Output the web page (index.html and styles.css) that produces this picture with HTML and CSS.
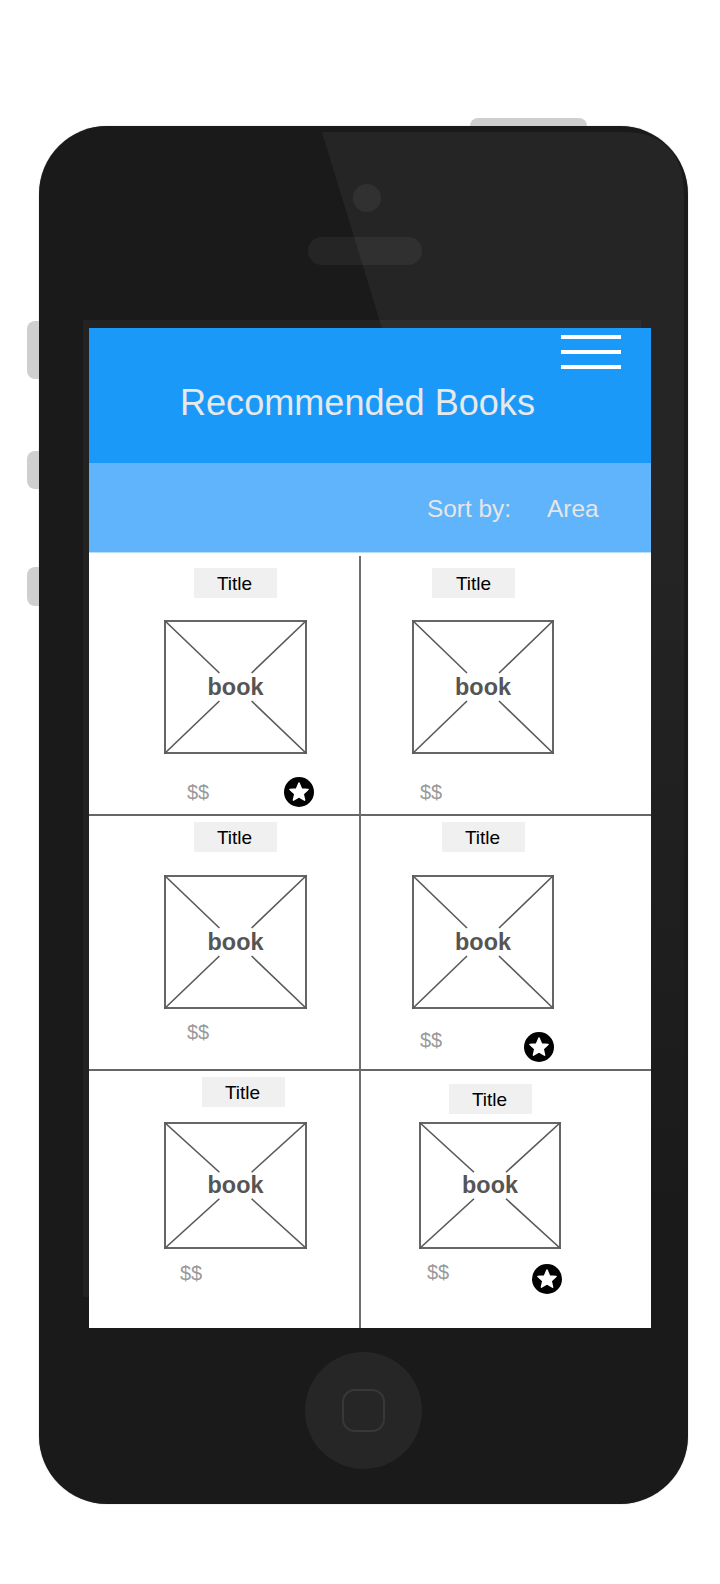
FILE: index.html
```html
<!DOCTYPE html>
<html>
    <head>
        <meta charset="UTF-8">
        <title>Recommended Books</title>
        <link rel="stylesheet" href="styles.css">
    </head>
    <body>
        <div class="phone">
            <div class="side-btn side-btn-top"></div>
            <div class="side-btn side-btn-mute"></div>
            <div class="side-btn side-btn-up"></div>
            <div class="side-btn side-btn-down"></div>
            <svg class="glare" width="649" height="1378" viewBox="0 0 649 1378">
                <defs>
                    <linearGradient id="glareFade" gradientUnits="userSpaceOnUse" x1="0" y1="0" x2="0" y2="1100">
                        <stop offset="0.3" stop-color="#fff" stop-opacity="0.05"/>
                        <stop offset="1" stop-color="#fff" stop-opacity="0"/>
                    </linearGradient>
                </defs>
                <path d="M283 6H583Q645 6 645 70V1180H400V202H343Z" fill="url(#glareFade)"/>
            </svg>
            <div class="bezel"></div>

            <div class="earpiece">
                <div class="camera"></div>
                <div class="speaker"></div>
            </div>

            <div class="screen">
                <div class="header">
                    <div class="menu"><span></span><span></span><span></span></div>
                    <h1>Recommended Books</h1>
                </div>
                <div class="sort">
                    <span>Sort by:</span>
                    <span>Area</span>
                </div>
                <div class="books">
                    <div class="cell left row-1 cell-1">
                        <div class="title">Title</div>
                        <div class="book">
                            <svg viewBox="0 0 142 134" preserveAspectRatio="none">
                                <path d="M0 0L55 53M142 0L87 53M0 134L55 81M142 134L87 81"/>
                            </svg>
                            <span>book</span>
                        </div>
                        <div class="foot">
                            <span class="price">$$</span>
                            <svg class="star" viewBox="0 0 30 30">
                                <circle cx="15" cy="15" r="15"/>
                                <polygon points="15,6 17.59,11.94 24.04,12.56 19.18,16.86 20.58,23.19 15,19.9 9.42,23.19 10.82,16.86 5.96,12.56 12.41,11.94"/>
                            </svg>
                        </div>
                    </div>
                    <div class="cell right row-1 cell-2">
                        <div class="title">Title</div>
                        <div class="book">
                            <svg viewBox="0 0 142 134" preserveAspectRatio="none">
                                <path d="M0 0L55 53M142 0L87 53M0 134L55 81M142 134L87 81"/>
                            </svg>
                            <span>book</span>
                        </div>
                        <div class="foot">
                            <span class="price">$$</span>
                        </div>
                    </div>
                    <div class="cell left row-2 cell-3">
                        <div class="title">Title</div>
                        <div class="book">
                            <svg viewBox="0 0 142 134" preserveAspectRatio="none">
                                <path d="M0 0L55 53M142 0L87 53M0 134L55 81M142 134L87 81"/>
                            </svg>
                            <span>book</span>
                        </div>
                        <div class="foot">
                            <span class="price">$$</span>
                        </div>
                    </div>
                    <div class="cell right row-2 cell-4">
                        <div class="title">Title</div>
                        <div class="book">
                            <svg viewBox="0 0 142 134" preserveAspectRatio="none">
                                <path d="M0 0L55 53M142 0L87 53M0 134L55 81M142 134L87 81"/>
                            </svg>
                            <span>book</span>
                        </div>
                        <div class="foot">
                            <span class="price">$$</span>
                            <svg class="star" viewBox="0 0 30 30">
                                <circle cx="15" cy="15" r="15"/>
                                <polygon points="15,6 17.59,11.94 24.04,12.56 19.18,16.86 20.58,23.19 15,19.9 9.42,23.19 10.82,16.86 5.96,12.56 12.41,11.94"/>
                            </svg>
                        </div>
                    </div>
                    <div class="cell left row-3 cell-5">
                        <div class="title">Title</div>
                        <div class="book">
                            <svg viewBox="0 0 142 134" preserveAspectRatio="none">
                                <path d="M0 0L55 53M142 0L87 53M0 134L55 81M142 134L87 81"/>
                            </svg>
                            <span>book</span>
                        </div>
                        <div class="foot">
                            <span class="price">$$</span>
                        </div>
                    </div>
                    <div class="cell right row-3 cell-6">
                        <div class="title">Title</div>
                        <div class="book">
                            <svg viewBox="0 0 142 134" preserveAspectRatio="none">
                                <path d="M0 0L55 53M142 0L87 53M0 134L55 81M142 134L87 81"/>
                            </svg>
                            <span>book</span>
                        </div>
                        <div class="foot">
                            <span class="price">$$</span>
                            <svg class="star" viewBox="0 0 30 30">
                                <circle cx="15" cy="15" r="15"/>
                                <polygon points="15,6 17.59,11.94 24.04,12.56 19.18,16.86 20.58,23.19 15,19.9 9.42,23.19 10.82,16.86 5.96,12.56 12.41,11.94"/>
                            </svg>
                        </div>
                    </div>
                </div>
            </div>

            <div class="chin">
                <div class="home"><div class="home-square"></div></div>
            </div>
        </div>
    </body>
</html>
```

FILE: styles.css
```css
html, body{
    margin: 0;
    padding: 0;
    background-color: #FFF;
}
body{
    font-family: "Liberation Sans", Arial, sans-serif;
    padding: 126px 32px 80px 39px;
    overflow: hidden;
}

/* phone shell */
.phone{
    position: relative;
    z-index: 0;
    width: 649px;
    height: 1378px;
    padding: 0 37px 0 50px;
    box-sizing: border-box;
    background-color: #1A1A1A;
    border-radius: 68px;
    box-shadow: 0 0 1px rgba(90, 90, 90, .7);
}
.side-btn{
    position: absolute;
    left: -12px;
    width: 12px;
    background-color: #CFCFCF;
    border-radius: 8px 0 0 8px;
}
.side-btn-top{
    left: 431px;
    top: -8px;
    width: 117px;
    height: 8px;
    border-radius: 8px 8px 0 0;
}
.side-btn-mute{
    top: 195px;
    height: 58px;
}
.side-btn-up{
    top: 325px;
    height: 38px;
}
.side-btn-down{
    top: 441px;
    height: 39px;
}
.glare{
    position: absolute;
    left: 0;
    top: 0;
    z-index: -1;
}
.bezel{
    position: absolute;
    left: 44px;
    top: 194px;
    width: 558px;
    height: 977px;
    z-index: -1;
    background-color: rgba(255, 255, 255, .04);
}
.earpiece{
    height: 202px;
    box-sizing: border-box;
    padding-top: 58px;
    padding-left: 219px;
}
.camera{
    width: 28px;
    height: 28px;
    margin-left: 45px;
    border-radius: 50%;
    background-color: rgba(255, 255, 255, .06);
}
.speaker{
    width: 114px;
    height: 28px;
    margin-top: 25px;
    border-radius: 14px;
    background-color: rgba(255, 255, 255, .05);
}
.chin{
    height: 176px;
    box-sizing: border-box;
    padding: 24px 0 0 216px;
}
.home{
    width: 117px;
    height: 117px;
    border-radius: 50%;
    background-color: #262626;
    display: flex;
    justify-content: center;
    align-items: center;
}
.home-square{
    width: 43px;
    height: 43px;
    box-sizing: border-box;
    border: 2px solid #383838;
    border-radius: 13px;
}

/* screen */
.screen{
    width: 562px;
    height: 1000px;
    background-color: #FFF;
    display: flex;
    flex-direction: column;
}
.header{
    height: 135px;
    box-sizing: border-box;
    padding-top: 7px;
    background-color: #1B99F8;
    display: flex;
    flex-direction: column;
}
.menu{
    align-self: flex-end;
    width: 60px;
    margin-right: 30px;
    display: flex;
    flex-direction: column;
    gap: 11px;
}
.menu span{
    height: 4px;
    background-color: #FFF;
}
h1{
    margin: 14px 0 0 91px;
    font-size: 36.1px;
    line-height: 40px;
    font-weight: normal;
    color: #E8E8E8;
}
.sort{
    height: 90px;
    box-sizing: border-box;
    padding: 3px 0 0 338px;
    background-color: #60B4FB;
    border-bottom: 1px solid #B9DEFF;
    display: flex;
    align-items: center;
    gap: 36px;
    font-size: 24.4px;
    color: #E6E6E6;
}

/* book grid */
.books{
    margin-top: 3px;
    flex: 1;
    display: grid;
    grid-template-columns: 272px 290px;
    grid-template-rows: 260px 255px 1fr;
}
.cell{
    box-sizing: border-box;
}
.left{
    padding-left: 75px;
    border-right: 2px solid #6E6E6E;
}
.right{
    padding-left: 51px;
}
.row-1, .row-2{
    border-bottom: 2px solid #666;
}
.title{
    width: 83px;
    height: 30px;
    line-height: 32px;
    text-indent: -2px;
    text-align: center;
    font-size: 19px;
    color: #000;
    background-color: #F0F0F0;
}
.book{
    position: relative;
    width: 142px;
    height: 134px;
    margin-top: 23px;
    box-sizing: border-box;
    border: 2px solid #666;
    display: flex;
    justify-content: center;
    align-items: center;
    font-size: 23.4px;
    font-weight: bold;
    color: #555;
}
.left .book{
    width: 143px;
}
.book svg{
    position: absolute;
    left: -2px;
    top: -2px;
    width: calc(100% + 4px);
    height: calc(100% + 4px);
}
.book path{
    fill: none;
    stroke: #5A5A5A;
    stroke-width: 1.6;
}
.book span{
    position: relative;
}
.foot{
    min-height: 30px;
    display: flex;
    align-items: center;
    margin-top: 23px;
}
.price{
    font-size: 20px;
    line-height: 24px;
    color: #999;
    margin-left: 23px;
}
.star{
    width: 30px;
    height: 30px;
    margin-left: 75px;
}
.star polygon{
    fill: #FFF;
    stroke: #FFF;
    stroke-width: 1.5;
    stroke-linejoin: round;
}

/* every cell in the wireframe sits a little differently */
.cell-1 .title, .cell-3 .title{
    margin-left: 30px;
}
.cell-1 .title{
    margin-top: 12px;
}
.cell-1 .book, .cell-2 .book{
    margin-top: 22px;
}
.cell-2 .title{
    margin: 12px 0 0 20px;
    text-indent: 0;
}
.cell-2 .price, .cell-4 .price{
    margin-left: 8px;
}
.cell-3 .title, .cell-4 .title{
    margin-top: 6px;
}
.cell-3 .foot{
    margin-top: 8px;
}
.cell-4 .title{
    margin-left: 30px;
}
.cell-4 .price, .cell-6 .price{
    margin-top: -7px;
    margin-bottom: 7px;
}
.cell-4 .star{
    margin-left: 82px;
}
.cell-5 .title{
    margin: 6px 0 0 38px;
}
.cell-5 .book, .cell-6 .book{
    height: 127px;
}
.cell-5 .book{
    margin-top: 15px;
}
.cell-5 .foot{
    margin-top: 9px;
}
.cell-5 .price{
    margin-left: 16px;
}
.cell-6{
    padding-left: 58px;
}
.cell-6 .title{
    margin: 13px 0 0 30px;
}
.cell-6 .book{
    margin-top: 8px;
}
.cell-6 .foot{
    margin-top: 15px;
}
.cell-6 .price{
    margin-left: 8px;
}
.cell-6 .star{
    margin-left: 83px;
}
```
